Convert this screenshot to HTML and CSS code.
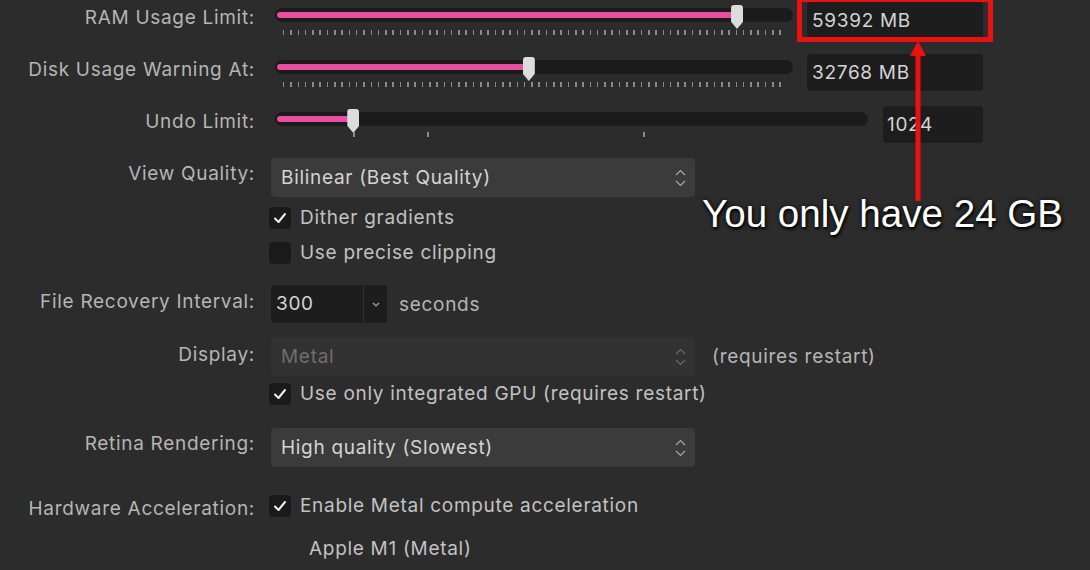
FILE: index.html
```html
<!DOCTYPE html>
<html lang="en">
<head>
    <meta charset="UTF-8">
    <title>Performance Preferences</title>
    <link rel="stylesheet" href="styles.css">
</head>
<body>
    <main class="prefs">
        <div class="row row-slider">
            <span class="label">RAM Usage Limit:</span>
            <div class="slider">
                <div class="track">
                    <div class="fill" style="width: 89.2%"></div>
                    <div class="thumb" style="left: 89.2%"></div>
                </div>
                <div class="ticks"></div>
            </div>
            <div class="field field-mb marked">59392 MB</div>
        </div>

        <div class="row row-slider">
            <span class="label">Disk Usage Warning At:</span>
            <div class="slider">
                <div class="track">
                    <div class="fill" style="width: 49%"></div>
                    <div class="thumb" style="left: 49%"></div>
                </div>
                <div class="ticks"></div>
            </div>
            <div class="field field-mb">32768 MB</div>
        </div>

        <div class="row row-slider row-undo">
            <span class="label">Undo Limit:</span>
            <div class="slider slider-long">
                <div class="track">
                    <div class="fill" style="width: 13.2%"></div>
                    <div class="thumb" style="left: 13.2%"></div>
                </div>
                <div class="ticks-sparse">
                    <span style="left: 78px"></span>
                    <span style="left: 152px"></span>
                    <span style="left: 368px"></span>
                </div>
            </div>
            <div class="field field-small">1024</div>
        </div>

        <div class="row row-popup">
            <span class="label">View Quality:</span>
            <div class="popup">
                <span>Bilinear (Best Quality)</span>
                <svg class="updown" width="11" height="18" viewBox="0 0 11 18"><path d="M1 6 L5.5 1.5 L10 6 M1 12 L5.5 16.5 L10 12" /></svg>
            </div>
        </div>

        <div class="row row-check check-dither">
            <span class="box checked"><svg width="22" height="22" viewBox="0 0 22 22"><path d="M6 11.5 L9.5 15 L16 7" /></svg></span>
            <span class="check-text">Dither gradients</span>
        </div>

        <div class="row row-check check-clip">
            <span class="box"></span>
            <span class="check-text">Use precise clipping</span>
        </div>

        <div class="row row-recovery">
            <span class="label">File Recovery Interval:</span>
            <div class="combo">
                <span class="combo-value">300</span>
                <span class="combo-btn"><svg width="8" height="5" viewBox="0 0 8 5"><path d="M1 1 L4 4 L7 1" /></svg></span>
            </div>
            <span class="unit">seconds</span>
        </div>

        <div class="row row-display">
            <span class="label">Display:</span>
            <div class="popup popup-disabled">
                <span>Metal</span>
                <svg class="updown" width="11" height="18" viewBox="0 0 11 18"><path d="M1 6 L5.5 1.5 L10 6 M1 12 L5.5 16.5 L10 12" /></svg>
            </div>
            <span class="unit unit-note">(requires restart)</span>
        </div>

        <div class="row row-check check-gpu">
            <span class="box checked"><svg width="22" height="22" viewBox="0 0 22 22"><path d="M6 11.5 L9.5 15 L16 7" /></svg></span>
            <span class="check-text">Use only integrated GPU (requires restart)</span>
        </div>

        <div class="row row-retina">
            <span class="label">Retina Rendering:</span>
            <div class="popup">
                <span>High quality (Slowest)</span>
                <svg class="updown" width="11" height="18" viewBox="0 0 11 18"><path d="M1 6 L5.5 1.5 L10 6 M1 12 L5.5 16.5 L10 12" /></svg>
            </div>
        </div>

        <div class="row row-hardware">
            <span class="label">Hardware Acceleration:</span>
            <span class="box checked"><svg width="22" height="22" viewBox="0 0 22 22"><path d="M6 11.5 L9.5 15 L16 7" /></svg></span>
            <span class="check-text">Enable Metal compute acceleration</span>
        </div>

        <div class="row row-device">
            <span class="device">Apple M1 (Metal)</span>
        </div>
    </main>

    <!-- annotation drawn over the screenshot -->
    <svg class="arrow" width="18" height="160" viewBox="0 0 18 160">
        <path d="M9 0 L17 15 L1 15 Z" />
        <rect x="6.5" y="12" width="5" height="148" />
    </svg>
    <div class="note">You only have 24 GB</div>
</body>
</html>
```

FILE: styles.css
```css
body {
    margin: 0;
    background-color: #2c2c2c;
    font-family: Inter, "Noto Sans", sans-serif;
    font-size: 19px;
    letter-spacing: 0.7px;
    color: #b5b5b5;
    width: 1090px;
    height: 570px;
    overflow: hidden;
    position: relative;
}
.prefs {
    display: flex;
    flex-direction: column;
}
.row {
    display: flex;
    align-items: flex-start;
}
.label {
    flex: none;
    width: 255px;
    margin-right: 15px;
    text-align: right;
    white-space: nowrap;
}

/* sliders */
.row-slider {
    height: 52px;
}
.row-slider .label {
    line-height: 35px;
}
.row-undo {
    height: 54px;
}
.slider {
    width: 518px;
    margin-left: 5px;
}
.slider-long {
    width: 593px;
}
.track {
    position: relative;
    height: 14px;
    margin-top: 8px;
    background-color: #1b1b1b;
    border-radius: 7px;
}
.fill {
    position: absolute;
    left: 2px;
    top: 4px;
    height: 6px;
    background-color: #e94fa0;
    border-radius: 3px 0 0 3px;
}
.thumb {
    position: absolute;
    top: -3px;
    width: 12px;
    height: 24px;
    margin-left: -6px;
    background-color: #dcdcdc;
    border-radius: 3px 3px 0 0;
    clip-path: polygon(0 0, 100% 0, 100% 70%, 50% 100%, 0 70%);
}
.ticks {
    height: 5px;
    margin: 8px 6px 0 8px;
    background: repeating-linear-gradient(to right, #8a8a8a 0 1.5px, transparent 1.5px 7.3px);
}
.ticks-sparse {
    position: relative;
    height: 5px;
    margin-top: 6px;
}
.ticks-sparse span {
    position: absolute;
    top: 0;
    width: 1.5px;
    height: 5px;
    background-color: #8a8a8a;
}
.field {
    flex: none;
    height: 37px;
    line-height: 37px;
    margin-top: 2px;
    background-color: #1d1d1d;
    border-radius: 4px;
    color: #d4d4d4;
    box-sizing: border-box;
}
.field-mb {
    width: 176px;
    margin-left: 14px;
    padding-left: 5px;
}
.field-small {
    width: 100px;
    margin-left: 15px;
    padding-left: 4px;
}
.marked {
    position: relative;
}
.marked::after {
    content: "";
    position: absolute;
    left: -10px;
    right: -10px;
    top: -5px;
    bottom: -3px;
    border: 5px solid #ec1111;
}

/* popups */
.popup {
    display: flex;
    align-items: center;
    justify-content: space-between;
    width: 424px;
    height: 39px;
    margin-left: 1px;
    padding: 0 9px 0 10px;
    box-sizing: border-box;
    background-color: #3b3b3b;
    border-radius: 4px;
    color: #d4d4d4;
}
.popup-disabled {
    background-color: #323232;
    color: #6e6e6e;
}
.updown path {
    fill: none;
    stroke: #a8a8a8;
    stroke-width: 1.2;
}
.popup-disabled .updown path {
    stroke: #6a6a6a;
}
.row-popup .label {
    line-height: 31px;
}

/* checkboxes */
.row-check {
    padding-left: 269px;
    align-items: center;
}
.box {
    flex: none;
    width: 22px;
    height: 22px;
    background-color: #1a1a1a;
    border-radius: 4px;
}
.box svg {
    display: block;
}
.box path {
    fill: none;
    stroke: #f0f0f0;
    stroke-width: 2;
    stroke-linecap: round;
    stroke-linejoin: round;
}
.check-text {
    margin-left: 9px;
    color: #c2c2c2;
    line-height: 22px;
}
.check-dither {
    margin-top: 10px;
}
.check-clip {
    margin-top: 13px;
}
.check-gpu {
    margin-top: 7px;
}

/* file recovery */
.row-recovery {
    margin-top: 21px;
    align-items: center;
}
.row-recovery .label {
    align-self: flex-start;
    line-height: 34px;
}
.combo {
    display: flex;
    height: 38px;
    margin-left: 1px;
    background-color: #1d1d1d;
    border-radius: 4px;
}
.combo-value {
    width: 93px;
    padding-left: 5px;
    line-height: 38px;
    color: #d4d4d4;
    box-sizing: border-box;
    border-right: 1px solid #333;
}
.combo-btn {
    display: flex;
    align-items: center;
    justify-content: center;
    width: 23px;
}
.combo-btn path {
    fill: none;
    stroke: #a8a8a8;
    stroke-width: 1.2;
}
.unit {
    margin-left: 12px;
    color: #b5b5b5;
}

.row-display {
    margin-top: 14px;
    align-items: center;
}
.row-display .label {
    align-self: flex-start;
    line-height: 36px;
}
.unit-note {
    margin-left: 17px;
}

.row-retina {
    margin-top: 23px;
}
.row-retina .label {
    line-height: 31px;
}

.row-hardware {
    margin-top: 28px;
}
.row-hardware .label {
    line-height: 28px;
    margin-right: 14px;
}

.row-device {
    margin-top: 15px;
}
.device {
    margin-left: 309px;
    line-height: 22px;
    color: #c2c2c2;
}

/* annotation */
.arrow {
    position: absolute;
    left: 909px;
    top: 41px;
}
.arrow path,
.arrow rect {
    fill: #ec1111;
}
.note {
    position: absolute;
    left: 702px;
    top: 195px;
    font-family: "Liberation Sans", Arial, sans-serif;
    font-size: 38.6px;
    line-height: 38px;
    letter-spacing: 0;
    color: #ffffff;
    white-space: nowrap;
    text-shadow: 1px 2px 3px #000, 0 0 4px rgba(0, 0, 0, 0.8);
}
```
